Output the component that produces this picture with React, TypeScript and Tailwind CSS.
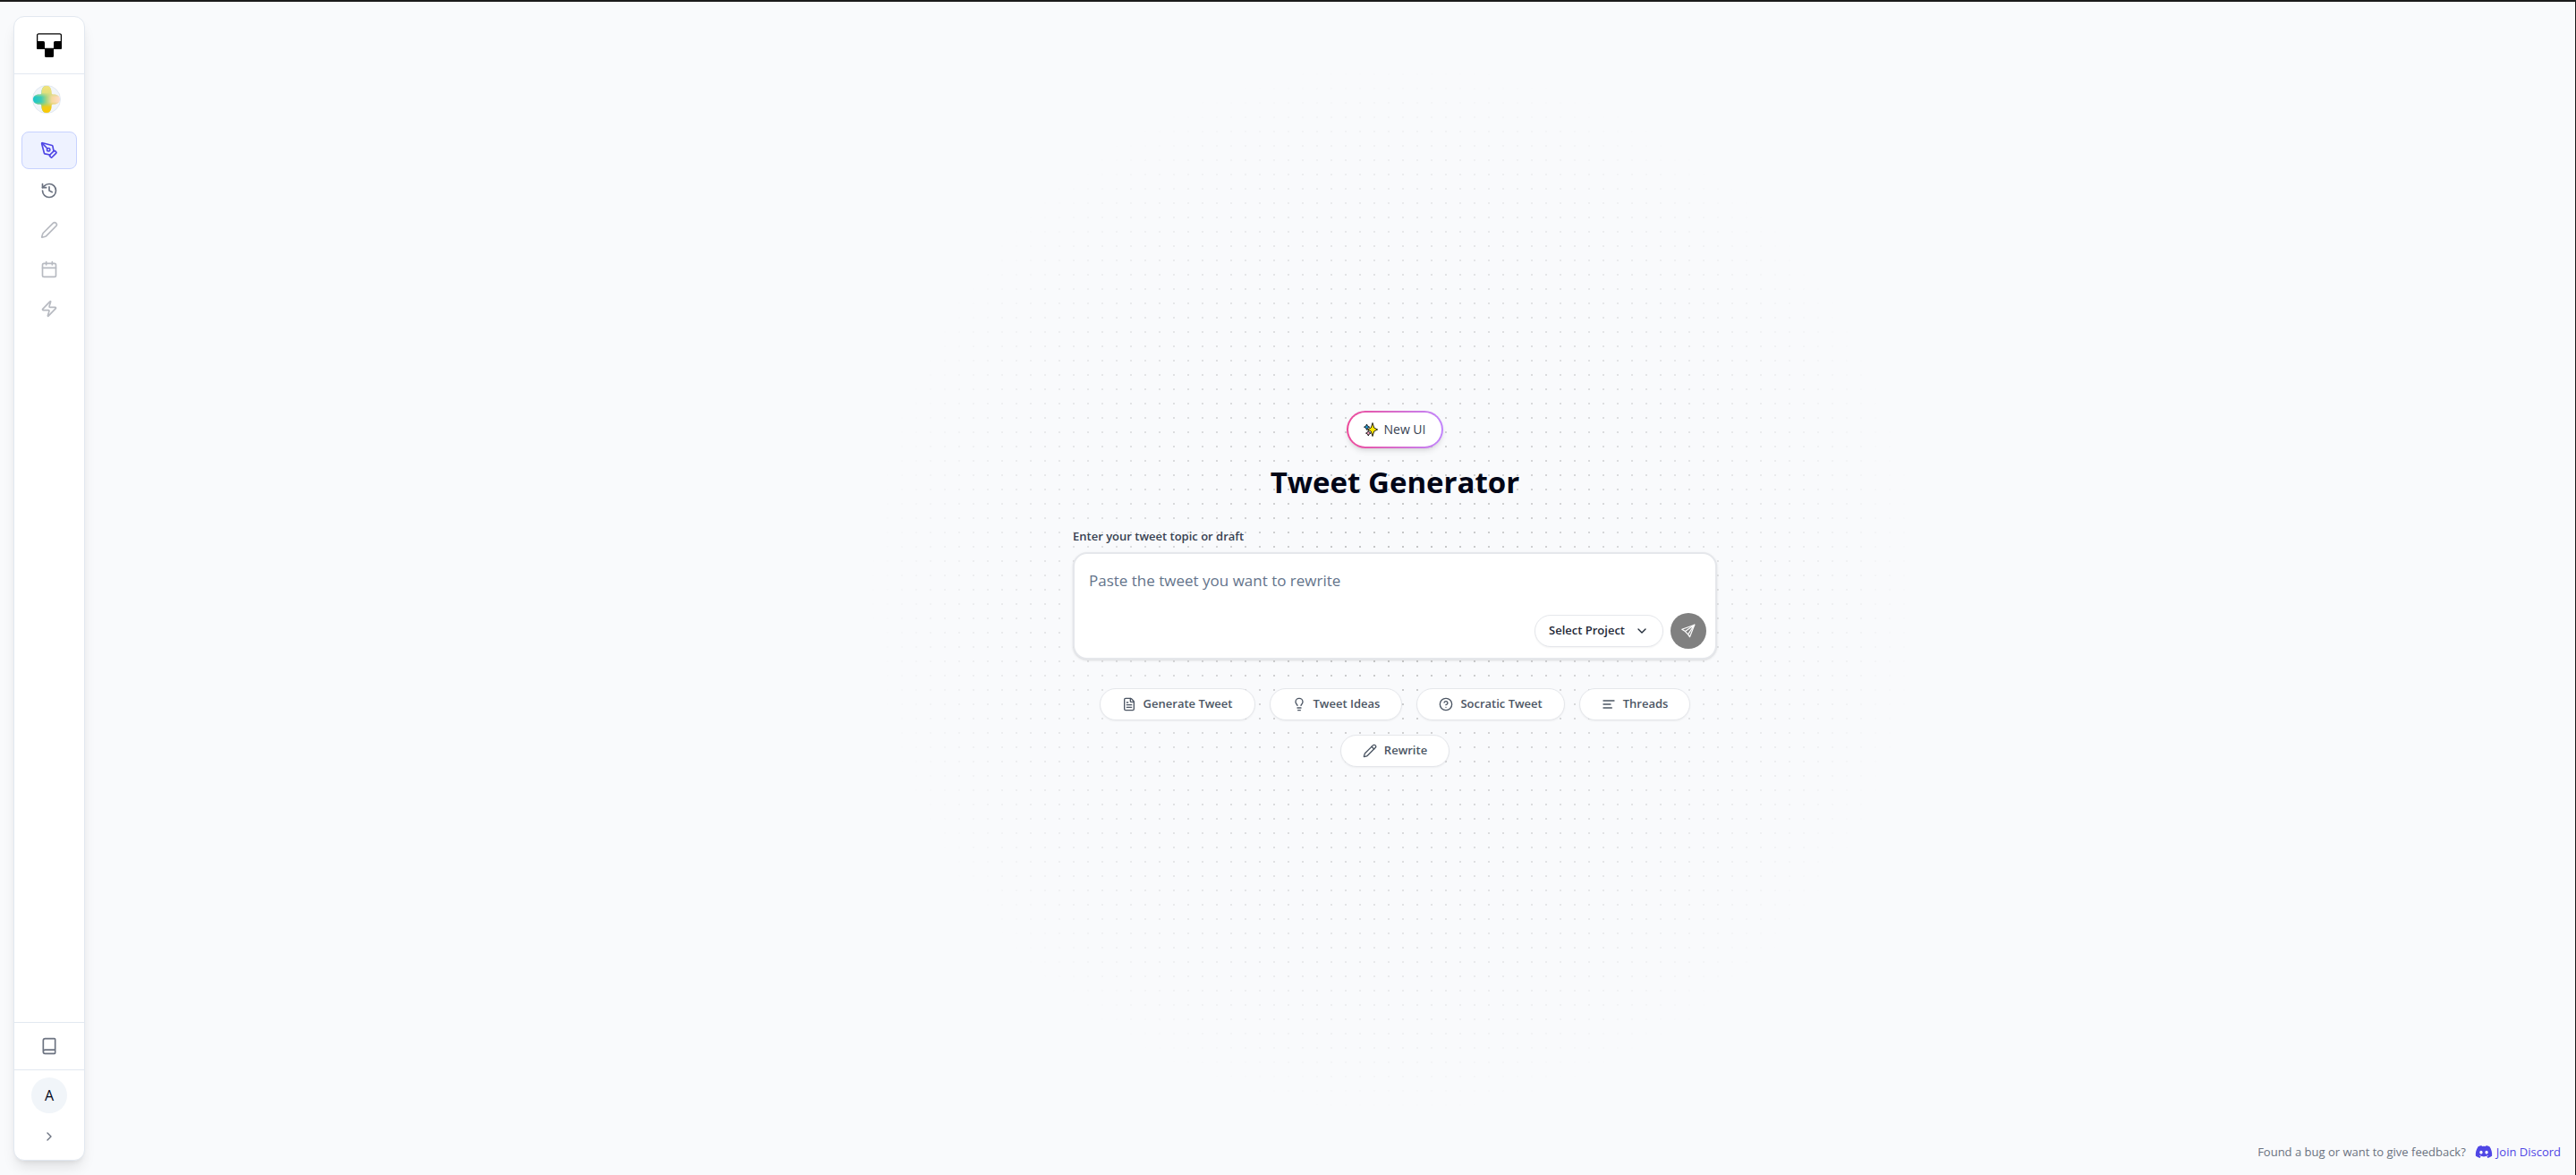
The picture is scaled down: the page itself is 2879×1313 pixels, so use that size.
import { useState } from "react";
import type { ComponentType, ReactNode } from "react";
import clsx from "clsx";
import {
  Book,
  Calendar,
  ChevronDown,
  ChevronRight,
  CircleHelp,
  FileText,
  History,
  Lightbulb,
  Pen,
  PenTool,
  Pencil,
  Zap,
} from "lucide-react";
import { FaDiscord } from "react-icons/fa";

const navItems = [
  { label: "Tweet generator", icon: PenTool, disabled: false },
  { label: "History", icon: History, disabled: false },
  { label: "Drafts", icon: Pen, disabled: true },
  { label: "Schedule", icon: Calendar, disabled: true },
  { label: "Automations", icon: Zap, disabled: true },
];

const modes = [
  { label: "Generate Tweet", icon: FileText },
  { label: "Tweet Ideas", icon: Lightbulb },
  { label: "Socratic Tweet", icon: CircleHelp },
  { label: "Threads", icon: LinesIcon },
  { label: "Rewrite", icon: Pencil },
];

function Logo() {
  return (
    <svg viewBox="0 0 28 28" className="size-7" aria-hidden="true">
      <rect x="0.6" y="0.9" width="26.8" height="16.5" rx="1.5" fill="#fff" stroke="#000" strokeWidth="1.3" />
      <path d="M0 9h7.500a1.500 1.500 0 0 1 1.500 1.500V18H1.500A1.500 1.500 0 0 1 0 16.500z" />
      <path d="M28 9h-7.500a1.500 1.500 0 0 0-1.500 1.500V18h7.500a1.500 1.500 0 0 0 1.500-1.500z" />
      <path d="M9 18h10v7.500a1.500 1.500 0 0 1-1.500 1.500h-7A1.500 1.500 0 0 1 9 25.500z" />
    </svg>
  );
}

function ProjectAvatar() {
  return (
    <svg viewBox="0 0 32 32" className="size-8" aria-hidden="true">
      <defs>
        <linearGradient id="petal-h" gradientUnits="userSpaceOnUse" x1="1" x2="31" y1="16" y2="16">
          <stop offset="0" stopColor="#18c6c8" />
          <stop offset="0.3" stopColor="#3ccbb8" />
          <stop offset="0.5" stopColor="#a9d57f" />
          <stop offset="0.7" stopColor="#f6d99c" />
          <stop offset="1" stopColor="#ffdccb" />
        </linearGradient>
        <linearGradient id="petal-v" gradientUnits="userSpaceOnUse" x1="16" x2="16" y1="1" y2="31">
          <stop offset="0" stopColor="#f5e27a" />
          <stop offset="0.25" stopColor="#e2e07c" />
          <stop offset="0.42" stopColor="#c2db84" stopOpacity="0" />
          <stop offset="0.6" stopColor="#c8cf48" stopOpacity="0" />
          <stop offset="0.78" stopColor="#eccb1c" />
          <stop offset="1" stopColor="#ffc800" />
        </linearGradient>
        <path
          id="petals"
          d="M16 1c4 0 5.500 3.500 5.500 7 0 2 .6 2.500 2.500 2.500 3.500 0 7 1.500 7 5.500s-3.500 5.500-7 5.500c-2 0-2.500.6-2.500 2.500 0 3.500-1.500 7-5.500 7s-5.500-3.500-5.500-7c0-2-.6-2.500-2.500-2.500-3.500 0-7-1.500-7-5.500s3.500-5.500 7-5.500c2 0 2.500-.6 2.500-2.500 0-3.500 1.500-7 5.500-7z"
        />
      </defs>
      <circle cx="16" cy="16" r="15.500" fill="#f1f5f9" stroke="#e2e8f0" />
      <use href="#petals" fill="url(#petal-h)" />
      <use href="#petals" fill="url(#petal-v)" />
    </svg>
  );
}

function LinesIcon({ className }: { className?: string }) {
  return (
    <svg
      viewBox="0 0 24 24"
      fill="none"
      stroke="currentColor"
      strokeWidth="2"
      strokeLinecap="round"
      className={className}
      aria-hidden="true"
    >
      <path d="M21 6H3M15 12H3M17 18H3" />
    </svg>
  );
}

function PlaneIcon() {
  return (
    <svg viewBox="0 0 16 16" fill="none" stroke="currentColor" strokeLinejoin="round" className="size-4" aria-hidden="true">
      <path strokeWidth="1.2" d="M14.800 1.200L.8 6.200l3.600 2.400 3.200 3.200 1.900 2.900z" />
      <path strokeWidth="1.2" d="M4.400 8.600l10.400-7.400L7.600 11.800" />
    </svg>
  );
}

function Sparkles() {
  return (
    <svg viewBox="0 0 16 16" className="size-4" stroke="#111" strokeLinejoin="round" aria-hidden="true">
      <path fill="#1c9bd8" strokeWidth="0.9" d="M3.500 2l1 2.200 2.200 1-2.200 1-1 2.200-1-2.200L.5 5.200l2-1z" />
      <path fill="#f7a8c4" strokeWidth="0.9" d="M5.300 9.300l.9 1.900 1.900.9-1.900.9-.9 2-.9-2-1.900-.9 1.900-.9z" />
      <path fill="#ffe600" strokeWidth="0.9" d="M10 .5l1.700 5.500 4 2-4 2L10 15.500 8.300 10l-4-2 4-2z" />
    </svg>
  );
}

function Sidebar() {
  const [active, setActive] = useState(0);

  return (
    <aside className="w-60 shrink-0 py-4 pl-[15px]">
      <nav className="flex h-full w-20 flex-col rounded-xl border border-slate-200 bg-white shadow-lg">
        <a href="#" aria-label="Home" className="grid h-16 place-items-center border-b border-slate-200">
          <Logo />
        </a>

        <div className="flex flex-1 flex-col px-2 pt-3">
          <button aria-label="Switch project" className="ml-3 size-8 rounded-full">
            <ProjectAvatar />
          </button>
          <ul className="mt-5 space-y-1">
            {navItems.map(({ label, icon: Icon, disabled }, i) => (
              <li key={label}>
                <button
                  aria-label={label}
                  disabled={disabled}
                  onClick={() => setActive(i)}
                  className={clsx(
                    "grid w-full place-items-center rounded-lg",
                    i === active && "h-[42px] border border-[#c7d2fe] bg-[#eef2ff] text-[#4f46e5]",
                    i !== active && "h-10",
                    i !== active && !disabled && "text-[#6b7280]",
                    disabled && "text-[#b7bac1]"
                  )}
                >
                  <Icon className="size-5" />
                </button>
              </li>
            ))}
          </ul>
        </div>

        <div className="border-t border-slate-200 p-2">
          <button aria-label="Docs" className="grid h-9 w-full place-items-center text-[#6b7280]">
            <Book className="size-5" />
          </button>
        </div>
        <div className="flex flex-col items-center gap-2 border-t border-slate-200 p-2">
          <button className="size-10 rounded-full bg-slate-100 text-base text-slate-950">A</button>
          <button aria-label="Expand sidebar" className="grid h-9 w-full place-items-center text-[#6b7280]">
            <ChevronRight className="size-4" />
          </button>
        </div>
      </nav>
    </aside>
  );
}

function Composer() {
  const [text, setText] = useState("");

  return (
    <form className="w-full" onSubmit={(e) => e.preventDefault()}>
      <label htmlFor="topic" className="block text-[13px] leading-5 font-semibold text-[#374151]">
        Enter your tweet topic or draft
      </label>
      <div className="mt-2 h-[120px] rounded-2xl border-2 border-gray-200 bg-white shadow-sm">
        <textarea
          id="topic"
          rows={2}
          value={text}
          onChange={(e) => setText(e.target.value)}
          placeholder="Paste the tweet you want to rewrite"
          className="block h-[66px] w-full resize-none px-4 pt-4 text-[17px] leading-7 text-slate-900 outline-none placeholder:text-[#64748b]"
        />
        <div className="flex items-center justify-end gap-2 pr-2.5">
          <div className="relative">
            <select
              aria-label="Project"
              className="h-9 w-36 appearance-none rounded-full border border-gray-200 bg-white pr-8 pl-[15px] text-[13px] font-semibold text-[#1f2937] shadow-xs"
            >
              <option>Select Project</option>
            </select>
            <ChevronDown className="pointer-events-none absolute top-2.5 right-4 size-4 text-[#1f2937]" />
          </div>
          <button
            type="submit"
            aria-label="Send"
            className="grid size-10 place-items-center rounded-full bg-[#808080] text-white"
          >
            <PlaneIcon />
          </button>
        </div>
      </div>
    </form>
  );
}

function Pill({ icon: Icon, children }: { icon: ComponentType<{ className?: string }>; children: ReactNode }) {
  return (
    <button className="flex h-9 items-center gap-2 rounded-full border border-gray-200 bg-white px-6 text-[13px] font-semibold text-[#4b5563] shadow-xs">
      <Icon className="size-4" />
      {children}
    </button>
  );
}

export default function App() {
  return (
    <div className="flex min-h-screen border-t-2 border-r border-[#1b1b1b] bg-[#f9fafc] font-['Open_Sans','Noto_Sans',sans-serif]">
      <Sidebar />

      <main className="relative flex flex-1 flex-col items-center justify-center">
        {/* dotted backdrop, fading out from the middle */}
        <div className="absolute inset-0 bg-[radial-gradient(#0000003b_1px,transparent_1px)] bg-size-[16px_16px] bg-position-[8px_9px] mask-[radial-gradient(circle_closest-side,#000,transparent_90%)]" />

        <div className="relative flex w-full max-w-[720px] flex-col items-center">
          <div className="rounded-full bg-linear-to-r from-[#ec4899] to-[#c084fc] p-0.5 shadow-md">
            <div className="flex h-[38px] items-center gap-1.5 rounded-full bg-white px-[17px] text-sm font-medium text-[#374151]">
              <Sparkles />
              New UI
            </div>
          </div>
          <h1 className="mt-[18px] mb-[30px] text-[33px] leading-10 font-bold text-[#020617]">Tweet Generator</h1>
          <Composer />
          <div className="mt-8 flex flex-wrap justify-center gap-4">
            {modes.map((mode) => (
              <Pill key={mode.label} icon={mode.icon}>
                {mode.label}
              </Pill>
            ))}
          </div>
        </div>

        <footer className="absolute right-4 bottom-4 flex items-center gap-2.5 text-[13px] leading-5 text-[#6b7280]">
          Found a bug or want to give feedback?
          <a href="#" className="flex items-center gap-1 text-[#4f46e5]">
            <FaDiscord className="size-5" />
            Join Discord
          </a>
        </footer>
      </main>
    </div>
  );
}
